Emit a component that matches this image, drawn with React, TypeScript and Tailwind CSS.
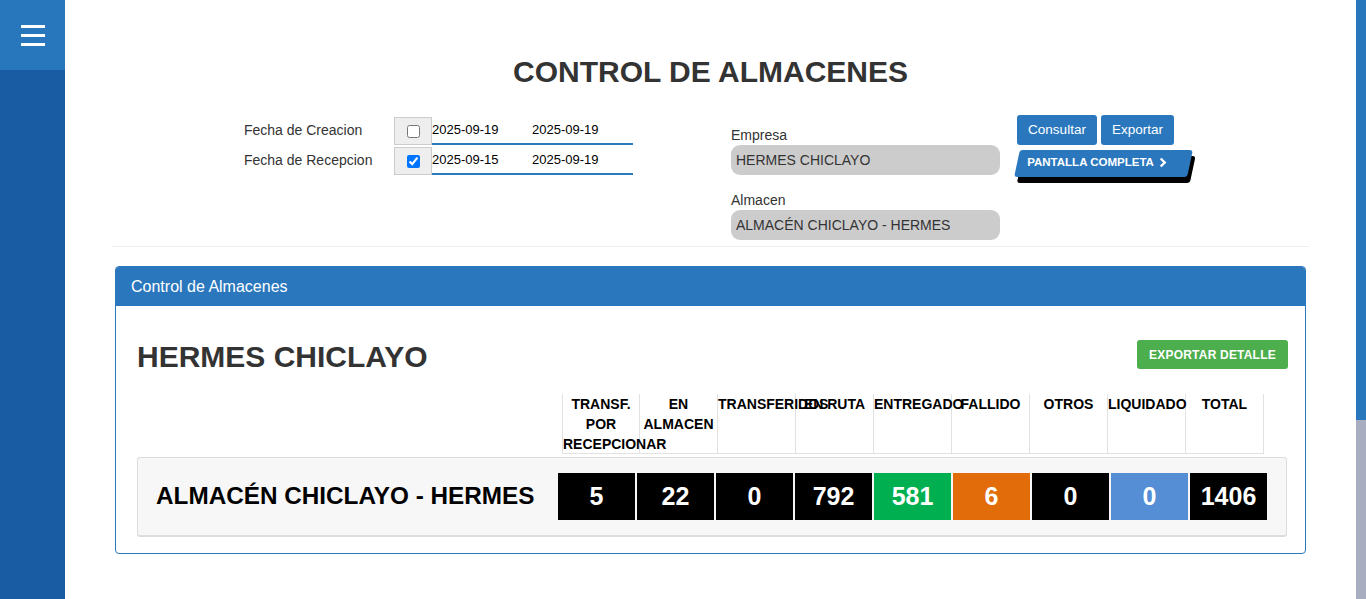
import React from "react";

const cols = [
  "TRANSF. POR RECEPCIONAR",
  "EN ALMACEN",
  "TRANSFERIDOS",
  "EN RUTA",
  "ENTREGADO",
  "FALLIDO",
  "OTROS",
  "LIQUIDADO",
  "TOTAL",
];

const vals: { v: string; c: string }[] = [
  { v: "5", c: "bg-black" },
  { v: "22", c: "bg-black" },
  { v: "0", c: "bg-black" },
  { v: "792", c: "bg-black" },
  { v: "581", c: "bg-[#00b050]" },
  { v: "6", c: "bg-[#e26b0a]" },
  { v: "0", c: "bg-black" },
  { v: "0", c: "bg-[#558ed5]" },
  { v: "1406", c: "bg-black" },
];

function DateRow({ label, checked, a, b }: { label: string; checked: boolean; a: string; b: string }) {
  return (
    <div className="flex h-[30px] items-stretch">
      <div className="w-[150px] flex items-center text-[14px] text-[#333]">{label}</div>
      <div className="w-[38px] h-[28px] mt-[2px] bg-[#eeeeee] border border-[#cccccc] flex items-center justify-center">
        <input type="checkbox" defaultChecked={checked} className="w-[13px] h-[13px] m-0" />
      </div>
      <div className="w-[201px] flex items-center border-b-2 border-[#2a7abf] text-[13px] text-black pt-[1px]">
        <span className="w-[100px]">{a}</span>
        <span>{b}</span>
      </div>
    </div>
  );
}

export default function App() {
  return (
    <div className="flex w-[1366px] h-[599px] overflow-hidden bg-white" style={{ fontFamily: '"Liberation Sans", Arial, sans-serif' }}>
      {/* Sidebar */}
      <div className="w-[65px] flex flex-col bg-[#1a5ca4]">
        <div className="h-[70px] bg-[#2877bd] flex flex-col items-center justify-center gap-[6px]">
          <div className="w-[24px] h-[3px] bg-white" />
          <div className="w-[24px] h-[3px] bg-white" />
          <div className="w-[24px] h-[3px] bg-white" />
        </div>
      </div>

      {/* Main */}
      <div className="flex-1 flex flex-col">
        <h1 className="mt-[54px] text-center text-[30px] leading-[36px] font-bold text-[#333]">CONTROL DE ALMACENES</h1>

        <div className="mx-[47px] mt-[25px] flex border-b border-[#eeeeee] pb-[6px]">
          <div className="ml-[132px] flex flex-col">
            <DateRow label="Fecha de Creacion" checked={false} a="2025-09-19" b="2025-09-19" />
            <DateRow label="Fecha de Recepcion" checked={true} a="2025-09-15" b="2025-09-19" />
          </div>

          <div className="ml-[98px] mt-[10px] w-[269px] flex flex-col">
            <div className="text-[14px] leading-[20px] text-[#333]">Empresa</div>
            <div className="h-[30px] rounded-[9px] bg-[#cccccc] flex items-center px-[5px] text-[14px] text-[#333]">HERMES CHICLAYO</div>
            <div className="mt-[15px] text-[14px] leading-[20px] text-[#333]">Almacen</div>
            <div className="h-[30px] rounded-[9px] bg-[#cccccc] flex items-center px-[5px] text-[14px] text-[#333]">ALMACÉN CHICLAYO - HERMES</div>
          </div>

          <div className="ml-[14px] flex flex-col">
            <div className="ml-[3px] flex gap-[4px]">
              <div className="w-[80px] h-[30px] rounded-[3px] bg-[#2a77bd] text-white text-[13.5px] flex items-center justify-center">Consultar</div>
              <div className="w-[73px] h-[30px] rounded-[3px] bg-[#2a77bd] text-white text-[13.5px] flex items-center justify-center">Exportar</div>
            </div>
            <div className="mt-[5px] ml-[3px] w-[173px] h-[27px] -skew-x-[12deg] rounded-[3px] bg-[#2a77bd] shadow-[4px_6px_0_#000] flex items-center pl-[10px] pb-[2px]">
              <div className="skew-x-[12deg] flex items-center gap-[5px] text-white text-[11.5px] font-bold">
                <span>PANTALLA COMPLETA</span>
                <svg width="8" height="11" viewBox="0 0 8 11">
                  <path d="M1.5 1.5 L5.5 5.5 L1.5 9.5" stroke="white" strokeWidth="2.4" fill="none" />
                </svg>
              </div>
            </div>
          </div>
        </div>

        {/* Panel */}
        <div className="mx-[50px] mt-[19px] border border-[#2a77bd] rounded-[4px] overflow-hidden">
          <div className="h-[39px] bg-[#2a77bd] flex items-center px-[15px] text-white text-[16px]">Control de Almacenes</div>
          <div className="pl-[21px] pr-[18px] pt-[34px] pb-[16px]">
            <div className="flex items-start justify-between">
              <h2 className="text-[30px] leading-[34px] font-bold text-[#333]">HERMES CHICLAYO</h2>
              <div className="mr-[-1px] w-[151px] h-[29px] rounded-[3px] bg-[#4cae4c] text-white text-[12px] font-bold flex items-center justify-center tracking-[0.2px]">EXPORTAR DETALLE</div>
            </div>

            <div className="mt-[20px] flex">
              <div className="w-[425px] shrink-0" />
              {cols.map((c, i) => (
                <div
                  key={i}
                  className={`w-[78px] shrink-0 h-[60px] border-r border-b border-[#e2e2e2] ${i === 0 ? "border-l" : ""} text-center text-[14px] leading-[20px] font-bold text-black`}
                >
                  <div className={i === 2 || i === 4 ? "whitespace-nowrap" : ""}>{c}</div>
                </div>
              ))}
            </div>

            <div className="mt-[3px] h-[80px] bg-[#f7f7f7] border border-[#dddddd] border-b-2 rounded-[3px] flex items-center">
              <div className="w-[420px] pl-[18px] text-[24.3px] font-bold text-black">ALMACÉN CHICLAYO - HERMES</div>
              <div className="flex gap-[2px]">
                {vals.map((v, i) => (
                  <div key={i} className={`w-[77px] h-[47px] ${v.c} text-white text-[25px] font-bold flex items-center justify-center`}>
                    {v.v}
                  </div>
                ))}
              </div>
            </div>
          </div>
        </div>
      </div>

      {/* Scrollbar */}
      <div className="w-[10px] flex flex-col">
        <div className="h-[420px] bg-[#2877bd]" />
        <div className="flex-1 bg-[#a8adc0]" />
      </div>
    </div>
  );
}
